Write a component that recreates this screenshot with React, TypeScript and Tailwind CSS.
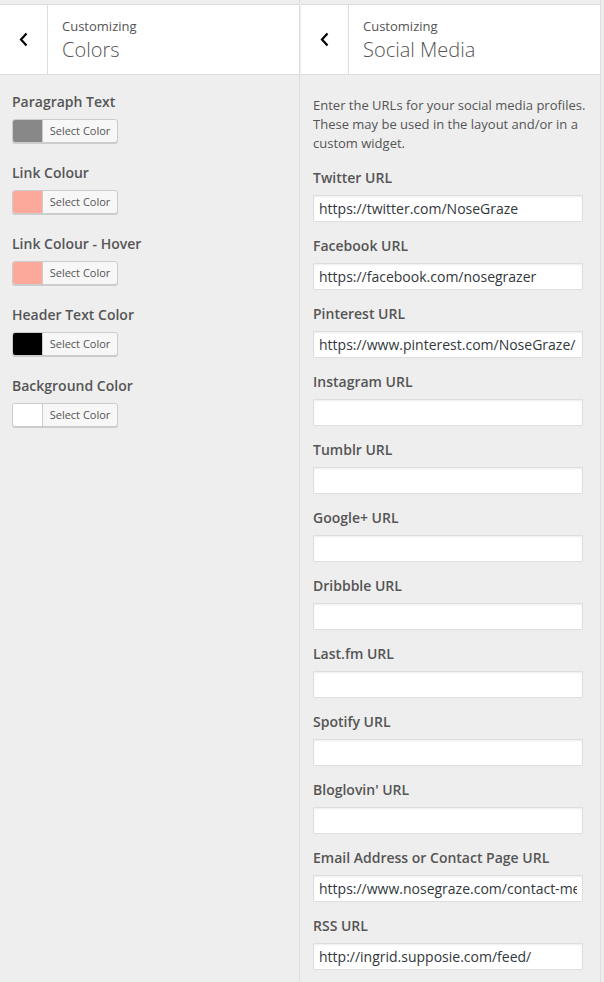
import React from 'react';

const colorFields = [
  { label: 'Paragraph Text', color: '#888888' },
  { label: 'Link Colour', color: '#fca89b' },
  { label: 'Link Colour - Hover', color: '#fca89b' },
  { label: 'Header Text Color', color: '#000000' },
  { label: 'Background Color', color: '#ffffff' },
];

const socialFields = [
  { label: 'Twitter URL', value: 'https://twitter.com/NoseGraze' },
  { label: 'Facebook URL', value: 'https://facebook.com/nosegrazer' },
  { label: 'Pinterest URL', value: 'https://www.pinterest.com/NoseGraze/' },
  { label: 'Instagram URL', value: '' },
  { label: 'Tumblr URL', value: '' },
  { label: 'Google+ URL', value: '' },
  { label: 'Dribbble URL', value: '' },
  { label: 'Last.fm URL', value: '' },
  { label: 'Spotify URL', value: '' },
  { label: "Bloglovin' URL", value: '' },
  { label: 'Email Address or Contact Page URL', value: 'https://www.nosegraze.com/contact-me/' },
  { label: 'RSS URL', value: 'http://ingrid.supposie.com/feed/' },
];

function PanelHeader({ title }: { title: string }) {
  return (
    <div className="mt-[4px] flex h-[71px] border-y border-[#ddd] bg-white">
      <div className="flex w-[48px] items-center justify-center border-r border-[#ddd]">
        <svg width="10" height="15" viewBox="0 0 10 15">
          <polyline points="7.5,1.5 2,7.5 7.5,13.5" fill="none" stroke="#000" strokeWidth="2.2" />
        </svg>
      </div>
      <div className="pl-[14px] pt-[11px]">
        <div className="text-[13px] leading-[20px] text-[#555]">Customizing</div>
        <div className="text-[20px] font-light leading-[28px] text-[#555]">{title}</div>
      </div>
    </div>
  );
}

function ColorField({ label, color }: { label: string; color: string }) {
  return (
    <div className="mb-[20px]">
      <div className="mb-[7px] text-[14px] font-semibold leading-[20px] text-[#555]">{label}</div>
      <div className="flex h-[24px] w-[106px] overflow-hidden rounded-[3px] border border-[#ccc] bg-[#f7f7f7] shadow-[0_1px_0_#ccc]">
        <span className="w-[30px] border-r border-[#ccc]" style={{ backgroundColor: color }} />
        <span className="flex flex-1 items-center justify-center text-[11px] text-[#555]">Select Color</span>
      </div>
    </div>
  );
}

function UrlField({ label, value }: { label: string; value: string }) {
  return (
    <div className="mb-[14px]">
      <div className="mb-[7px] text-[14px] font-semibold leading-[20px] text-[#555]">{label}</div>
      <input
        type="text"
        defaultValue={value}
        className="block h-[27px] w-[270px] border border-[#ddd] bg-white px-[5px] text-[14px] text-[#32373c] shadow-[inset_0_1px_2px_rgba(0,0,0,0.07)] outline-none"
      />
    </div>
  );
}

export default function App() {
  return (
    <div className="flex h-[982px] w-[604px] overflow-hidden bg-[#eee] font-['Open_Sans',sans-serif]">
      <div className="w-[300px] border-r border-[#ddd]">
        <PanelHeader title="Colors" />
        <div className="px-[12px] pt-[17px]">
          {colorFields.map((f) => (
            <ColorField key={f.label} label={f.label} color={f.color} />
          ))}
        </div>
      </div>
      <div className="ml-[1px] w-[300px] border-r border-[#ddd]">
        <PanelHeader title="Social Media" />
        <div className="px-[12px] pt-[21px]">
          <p className="mb-[15px] text-[13px] leading-[19px] text-[#555]">
            Enter the URLs for your social media profiles. These may be used in the layout and/or in a custom widget.
          </p>
          {socialFields.map((f) => (
            <UrlField key={f.label} label={f.label} value={f.value} />
          ))}
        </div>
      </div>
    </div>
  );
}
